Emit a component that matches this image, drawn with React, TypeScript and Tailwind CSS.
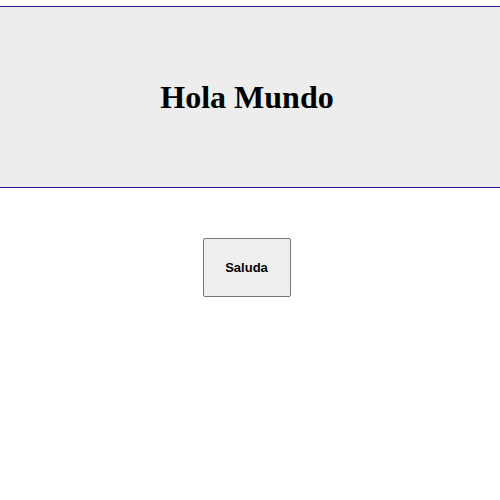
import React from 'react';

const App = () => {
  return (
    <div className="w-[500px] h-[500px] bg-white pt-[6px]">
      <header className="h-[182px] border-y border-[#1a1a80] bg-[#ededed] flex items-center justify-center pr-[6px]">
        <h1 className="text-[32px] font-bold text-black font-['Liberation_Serif',serif] leading-none">
          Hola Mundo
        </h1>
      </header>
      <div className="flex justify-center mt-[50px] pr-[7px]">
        <button className="w-[88px] h-[59px] rounded-[2px] border border-[#767676] bg-[#efefef] text-[13px] font-bold text-black font-['Liberation_Sans',sans-serif]">
          Saluda
        </button>
      </div>
    </div>
  );
};

export default App;
